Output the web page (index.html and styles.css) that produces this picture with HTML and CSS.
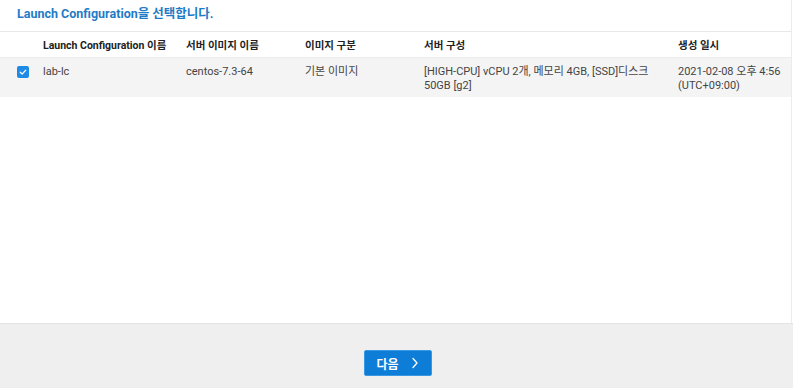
FILE: index.html
```html
<!DOCTYPE html>
<html lang="ko">
<head>
  <meta charset="UTF-8" />
  <meta name="viewport" content="width=device-width, initial-scale=1.0"/>
  <title>Launch Configuration 선택</title>
  <link rel="stylesheet" href="styles.css">
</head>
<body>
  <div class="wizard">
    <div class="content">
      <h2 class="title">Launch Configuration을 선택합니다.</h2>
      <table class="lc-table">
        <colgroup>
          <col class="c-check">
          <col class="c-name">
          <col class="c-image">
          <col class="c-type">
          <col class="c-spec">
          <col>
        </colgroup>
        <thead>
          <tr>
            <th></th>
            <th>Launch Configuration 이름</th>
            <th>서버 이미지 이름</th>
            <th>이미지 구분</th>
            <th>서버 구성</th>
            <th>생성 일시</th>
          </tr>
        </thead>
        <tbody>
          <tr class="selected">
            <td><span class="check"><svg viewBox="0 0 12 12" width="12" height="12"><path d="M3.2 6.2 L5.2 8 L8.8 4.2" fill="none" stroke="#fff" stroke-width="1.2" stroke-linecap="round" stroke-linejoin="round"/></svg></span></td>
            <td>lab-lc</td>
            <td>centos-7.3-64</td>
            <td>기본 이미지</td>
            <td>[HIGH-CPU] vCPU 2개, 메모리 4GB, [SSD]디스크<br>50GB [g2]</td>
            <td>2021-02-08 오후 4:56<br>(UTC+09:00)</td>
          </tr>
        </tbody>
      </table>
    </div>
    <div class="footer">
      <button class="next">다음 <svg class="chev" viewBox="0 0 8 12" width="8" height="12"><path d="M2 1.5 L6 6 L2 10.5" fill="none" stroke="#fff" stroke-width="1.3" stroke-linecap="round" stroke-linejoin="round"/></svg></button>
    </div>
  </div>
</body>
</html>
```

FILE: styles.css
```css
* { margin: 0; padding: 0; box-sizing: border-box; }
body { background: #fff; font-family: Roboto, "Noto Sans CJK KR", sans-serif; color: #333; }
.wizard { height: 388px; display: flex; flex-direction: column; }
.content { flex: 1; background: #fff; border-right: 1px solid #ececec; margin-right: 1px; }
.title { font-size: 12.5px; font-weight: bold; color: #1f7bc6; padding: 3px 0 0 17px; height: 31px; }
.lc-table { width: 100%; border-collapse: collapse; table-layout: fixed; }
.c-check { width: 43px; }
.c-name { width: 143px; }
.c-image { width: 119px; }
.c-type { width: 119px; }
.c-spec { width: 254px; }
.lc-table th { height: 26px; text-align: left; font-size: 10.5px; font-weight: bold; color: #222; border-top: 1px solid #e8e8e8; border-bottom: 1px solid #ececec; }
.lc-table td { font-size: 11px; color: #444; line-height: 14px; padding: 7px 0 4px; vertical-align: top; }
.selected { background: #f4f4f4; }
.check { display: block; width: 12px; height: 12px; margin: 1px 0 0 17px; background: #1e8ae6; border-radius: 2px; }
.check svg { display: block; }
.footer { height: 65px; background: #efefef; border-top: 1px solid #e4e4e4; display: flex; justify-content: center; padding-top: 26px; }
.next { width: 68px; height: 26px; background: #0d7dd8; border: 1px solid #3a97e3; border-radius: 2px; color: #fff; font-family: "Noto Sans CJK KR", sans-serif; font-size: 12px; font-weight: bold; display: flex; align-items: center; justify-content: center; gap: 12px; margin-left: 2px; }
.chev { display: block; }
```
